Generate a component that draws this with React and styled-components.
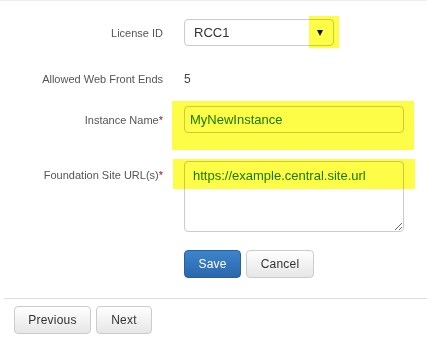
import React from "react";
import styled, { createGlobalStyle } from "styled-components";

const GlobalStyle = createGlobalStyle`
  body {
    margin: 0;
    background: #ffffff;
    font-family: "Liberation Sans", Arial, sans-serif;
  }
`;

const Page = styled.div`
  position: relative;
  width: 427px;
  height: 343px;
  border-top: 1px solid #eeeeee;
  box-sizing: border-box;
  overflow: hidden;
`;

const Form = styled.div`
  padding-top: 18px;
  display: flex;
  flex-direction: column;
`;

const Row = styled.div`
  display: flex;
  align-items: ${(p) => (p.$top ? "flex-start" : "center")};
  margin-top: ${(p) => p.$gap || 0}px;
  min-height: ${(p) => p.$height || 0}px;
`;

const Label = styled.div`
  width: 163px;
  padding-right: 21px;
  padding-top: ${(p) => p.$offset || 0}px;
  text-align: right;
  font-size: 11px;
  line-height: 16px;
  color: #555555;
  flex-shrink: 0;
`;

const Required = styled.span`
  color: #8b1a2b;
`;

const Value = styled.div`
  font-size: 12px;
  color: #444444;
`;

const Select = styled.div`
  width: 150px;
  height: 27px;
  box-sizing: border-box;
  border: 1px solid #cccccc;
  border-radius: 4px;
  display: flex;
  align-items: center;
  justify-content: space-between;
  padding: 0 10px 0 9px;
  font-size: 13px;
  color: #333333;
  background: #ffffff;
`;

const Arrow = styled.span`
  width: 0;
  height: 0;
  border-left: 3px solid transparent;
  border-right: 3px solid transparent;
  border-top: 6px solid #111111;
`;

const Input = styled.input`
  width: 220px;
  height: 27px;
  box-sizing: border-box;
  border: 1px solid #cccccc;
  border-radius: 4px;
  padding: 0 5px;
  font-family: "Liberation Sans", Arial, sans-serif;
  font-size: 13px;
  color: #1a7a1a;
  background: #ffffff;
  outline: none;
`;

const TextArea = styled.textarea`
  width: 220px;
  height: 71px;
  box-sizing: border-box;
  border: 1px solid #cccccc;
  border-radius: 4px;
  padding: 6px 8px;
  font-family: "Liberation Sans", Arial, sans-serif;
  font-size: 13px;
  line-height: 16px;
  color: #1a7a1a;
  background: #ffffff;
  outline: none;
`;

const Actions = styled.div`
  display: flex;
  gap: 5px;
  margin-top: 18px;
  padding-left: ${(p) => p.$indent || 0}px;
`;

const Button = styled.button`
  height: 28px;
  min-width: ${(p) => p.$width}px;
  box-sizing: border-box;
  border-radius: 4px;
  font-family: "Liberation Sans", Arial, sans-serif;
  font-size: 12px;
  letter-spacing: 0.2px;
  padding: 0 10px;
  border: 1px solid ${(p) => (p.$primary ? "#2a5f9e" : "#cccccc")};
  color: ${(p) => (p.$primary ? "#ffffff" : "#333333")};
  background: ${(p) =>
    p.$primary
      ? "linear-gradient(#3d84cc, #2b67ad)"
      : "linear-gradient(#ffffff, #e6e6e6)"};
`;

const Divider = styled.hr`
  margin: 20px 0 0 4px;
  border: none;
  border-top: 1px solid #dddddd;
`;

const Nav = styled(Actions)`
  margin-top: 7px;
`;

const Highlight = styled.div`
  position: absolute;
  left: ${(p) => p.$x}px;
  top: ${(p) => p.$y}px;
  width: ${(p) => p.$w}px;
  height: ${(p) => p.$h}px;
  background: #fdfd48;
  mix-blend-mode: multiply;
  pointer-events: none;
`;

export default function App() {
  return (
    <>
      <GlobalStyle />
      <Page>
        <Form>
          <Row $height={27}>
            <Label>License ID</Label>
            <Select>
              <span>RCC1</span>
              <Arrow />
            </Select>
          </Row>
          <Row $gap={20} $height={26}>
            <Label>Allowed Web Front Ends</Label>
            <Value>5</Value>
          </Row>
          <Row $gap={14} $height={27}>
            <Label>
              Instance Name<Required>*</Required>
            </Label>
            <Input readOnly value="MyNewInstance" />
          </Row>
          <Row $gap={28} $top>
            <Label $offset={6}>
              Foundation Site URL(s)<Required>*</Required>
            </Label>
            <TextArea readOnly value="https://example.central.site.url" />
          </Row>
          <Actions $indent={184}>
            <Button $primary $width={57}>Save</Button>
            <Button $width={68}>Cancel</Button>
          </Actions>
          <Divider />
          <Nav $indent={14}>
            <Button $width={77}>Previous</Button>
            <Button $width={56}>Next</Button>
          </Nav>
        </Form>
        <Highlight $x={309} $y={15} $w={30} $h={32} />
        <Highlight $x={172} $y={100} $w={242} $h={49} />
        <Highlight $x={173} $y={158} $w={242} $h={30} />
      </Page>
    </>
  );
}
